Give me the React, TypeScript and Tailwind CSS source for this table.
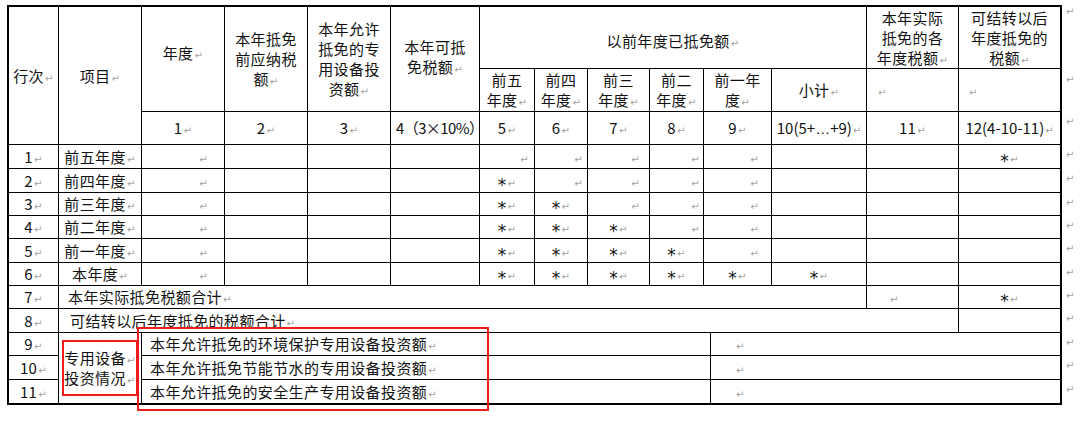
import type { ReactNode } from "react";

// paragraph mark, as Word shows it
const R = () => (
  <span className="ml-px font-['DejaVu_Sans'] text-[10px] leading-none text-[#a3a3a3]">↵</span>
);

const Star = () => (
  <span className="relative top-[4px] font-['DejaVu_Sans'] text-[17px] leading-none">*</span>
);

function Cell({
  className = "",
  align = "center",
  children,
}: {
  className?: string;
  align?: "center" | "start" | "end";
  children?: ReactNode;
}) {
  const justify =
    align === "start" ? "justify-start text-left" : align === "end" ? "justify-end text-right" : "justify-center text-center";
  return (
    <div className={`flex items-center bg-white ${justify} ${className}`}>
      <div className="whitespace-nowrap">{children}</div>
    </div>
  );
}

const rows = [
  { n: "1", label: "前五年度", stars: 0, sub: false, carry: true },
  { n: "2", label: "前四年度", stars: 1, sub: false, carry: false },
  { n: "3", label: "前三年度", stars: 2, sub: false, carry: false },
  { n: "4", label: "前二年度", stars: 3, sub: false, carry: false },
  { n: "5", label: "前一年度", stars: 4, sub: false, carry: false },
  { n: "6", label: "本年度", stars: 5, sub: true, carry: false },
];

// where the lone marks sit in the 前五…前一 columns
const markPad = ["pr-[5px]", "pr-[4px]", "pr-[9px]", "pr-[3px]", "pr-[12px]"];

const equipment = [
  { n: "9", text: "本年允许抵免的环境保护专用设备投资额" },
  { n: "10", text: "本年允许抵免节能节水的专用设备投资额" },
  { n: "11", text: "本年允许抵免的安全生产专用设备投资额" },
];

const endMarks = ["pt-0", "pt-[6px]", "pt-[5px]", ...Array(11).fill("pt-[5px]")];

export default function App() {
  return (
    <div className="relative h-[421px] w-[1080px] overflow-hidden bg-white pl-[7px] pt-[5px] font-['Noto_Sans_CJK_SC',sans-serif] text-[15px] leading-[20px] tracking-[0.4px] text-[#111]">
      <div className="flex items-start">
        {/* --- TABLE --- */}
        <div className="grid grid-cols-[49px_82px_82px_82px_82px_88px_54px_52px_61px_53px_6px_60px_94px_91px_101px] grid-rows-[61px_42px_32px_23px_23px_22px_22px_23px_22px_22px_23px_22px_23px_23px] gap-px border-2 border-black bg-black">
          {/* header row 1 */}
          <Cell className="row-span-3">行次<R /></Cell>
          <Cell className="row-span-3">项目<R /></Cell>
          <Cell className="row-span-2 pb-[12px]">年度<R /></Cell>
          <Cell className="row-span-2">本年抵免<br />前应纳税<br />额<R /></Cell>
          <Cell className="row-span-2">本年允许<br />抵免的专<br />用设备投<br />资额<R /></Cell>
          <Cell className="row-span-2 pb-[4px]">本年可抵<br />免税额<R /></Cell>
          <Cell className="col-span-7 pt-[6px]">以前年度已抵免额<R /></Cell>
          <Cell>本年实际<br />抵免的各<br />年度税额<R /></Cell>
          <Cell>可结转以后<br />年度抵免的<br />税额<R /></Cell>

          {/* header row 2 */}
          <Cell>前五<br />年度<R /></Cell>
          <Cell>前四<br />年度<R /></Cell>
          <Cell>前三<br />年度<R /></Cell>
          <Cell>前二<br />年度<R /></Cell>
          <Cell className="col-span-2">前一年<br />度<R /></Cell>
          <Cell>小计<R /></Cell>
          <Cell align="start" className="pl-[10px]"><R /></Cell>
          <Cell align="start" className="pl-[9px]"><R /></Cell>

          {/* header row 3: column numbers */}
          <Cell>1<R /></Cell>
          <Cell>2<R /></Cell>
          <Cell>3<R /></Cell>
          <Cell align="start" className="pl-[5px] tracking-[-0.6px]">4（3×10%）<R /></Cell>
          <Cell>5<R /></Cell>
          <Cell>6<R /></Cell>
          <Cell>7<R /></Cell>
          <Cell>8<R /></Cell>
          <Cell className="col-span-2">9<R /></Cell>
          <Cell className="tracking-normal">10(5+<span className="font-['Liberation_Sans']">…</span>+9)<R /></Cell>
          <Cell>11<R /></Cell>
          <Cell className="tracking-normal">12(4-10-11)<R /></Cell>

          {/* rows 1 - 6 */}
          {rows.map((r) => (
            <div key={r.n} className="contents">
              <Cell>{r.n}<R /></Cell>
              <Cell>{r.label}<R /></Cell>
              <Cell align="end" className="pr-[16px]"><R /></Cell>
              <Cell />
              <Cell />
              <Cell />
              {markPad.map((pad, j) =>
                j < r.stars ? (
                  <Cell key={j} className={j === 4 ? "col-span-2" : ""}>
                    <Star /><R />
                  </Cell>
                ) : (
                  <Cell key={j} align="end" className={j === 4 ? `col-span-2 ${pad}` : pad}>
                    <R />
                  </Cell>
                )
              )}
              <Cell>{r.sub && <><Star /><R /></>}</Cell>
              <Cell />
              <Cell>{r.carry && <><Star /><R /></>}</Cell>
            </div>
          ))}

          {/* row 7 */}
          <Cell>7<R /></Cell>
          <Cell align="start" className="col-span-12 pl-[9px]">本年实际抵免税额合计<R /></Cell>
          <Cell align="start" className="pl-[22px]"><R /></Cell>
          <Cell><Star /><R /></Cell>

          {/* row 8 */}
          <Cell>8<R /></Cell>
          <Cell align="start" className="col-span-13 pl-[11px]">可结转以后年度抵免的税额合计<R /></Cell>
          <Cell />

          {/* rows 9 - 11 */}
          {equipment.map((e, i) => (
            <div key={e.n} className="contents">
              <Cell>{e.n}<R /></Cell>
              {i === 0 && (
                <Cell className="row-span-3">
                  专用设备<R /><br />投资情况<R />
                </Cell>
              )}
              <Cell align="start" className="col-span-9 pl-[8px]">{e.text}<R /></Cell>
              <Cell align="start" className="col-span-4 pl-[24px]"><R /></Cell>
            </div>
          ))}
        </div>

        {/* end-of-row marks */}
        <div className="ml-[3px] grid grid-rows-[61px_42px_32px_23px_23px_22px_22px_23px_22px_22px_23px_22px_23px_23px] gap-px pt-[2px]">
          {endMarks.map((pad, i) => (
            <div key={i} className={`flex items-start leading-[10px] ${pad}`}>
              <R />
            </div>
          ))}
        </div>
      </div>

      {/* --- RED ANNOTATIONS --- */}
      <div className="pointer-events-none absolute left-[62px] top-[340px] h-[56px] w-[76px] border-2 border-[#f01c1c]" />
      <div className="pointer-events-none absolute left-[137px] top-[327px] h-[84px] w-[352px] border-2 border-[#f01c1c]" />
    </div>
  );
}
